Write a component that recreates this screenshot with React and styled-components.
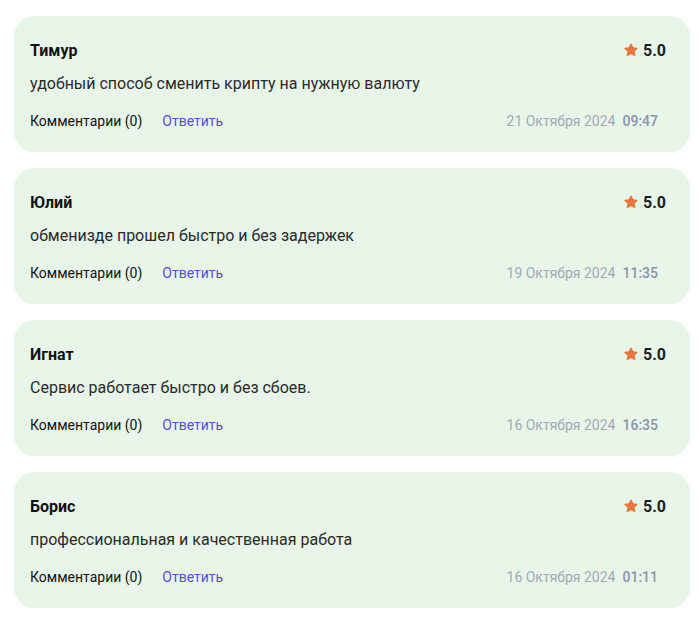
import styled, { createGlobalStyle } from "styled-components";

const Global = createGlobalStyle`
  body {
    margin: 0;
    background: #fff;
    font-family: Roboto, "Liberation Sans", sans-serif;
  }
`;

const List = styled.div`
  display: flex;
  flex-direction: column;
  gap: 16px;
  padding: 16px 9px 0 14px;
`;

const Card = styled.div`
  background: #e8f6ea;
  border-radius: 20px;
  padding: 24px 24px 21px 16px;
  height: 136px;
  box-sizing: border-box;
`;

const Head = styled.div`
  display: flex;
  justify-content: space-between;
  align-items: center;
  height: 20px;
`;

const Name = styled.span`
  font-weight: 700;
  font-size: 16px;
  color: #111;
`;

const Rating = styled.span`
  display: flex;
  align-items: center;
  gap: 4px;
  font-weight: 700;
  font-size: 16px;
  color: #1d1d1f;
`;

const Text = styled.p`
  margin: 14px 0 0;
  font-size: 16px;
  line-height: 20px;
  color: #2a2a2a;
`;

const Footer = styled.div`
  display: flex;
  align-items: center;
  margin-top: 17px;
  padding-right: 8px;
  height: 20px;
  font-size: 14px;
`;

const Comments = styled.span`
  color: #111;
`;

const Reply = styled.a`
  color: #5a4cf0;
  margin-left: 20px;
  cursor: pointer;
`;

const Date = styled.span`
  margin-left: auto;
  color: #a0a9b4;
`;

const Time = styled.span`
  margin-left: 7px;
  color: #8a95a3;
  font-weight: 500;
`;

function Star() {
  return (
    <svg width="16" height="16" viewBox="0 0 24 24">
      <path
        d="M12 2.2c.5 0 .9.3 1.1.7l2.4 5.1 5.5.7c.9.1 1.3 1.3.6 1.9l-4.1 3.8 1.1 5.5c.2.9-.8 1.6-1.6 1.1L12 18.3 7 21c-.8.5-1.8-.2-1.6-1.1l1.1-5.5-4.1-3.8c-.7-.6-.3-1.8.6-1.9l5.5-.7 2.4-5.1c.2-.4.6-.7 1.1-.7z"
        fill="#e8773f"
      />
    </svg>
  );
}

const reviews = [
  { name: "Тимур", text: "удобный способ сменить крипту на нужную валюту", date: "21 Октября 2024", time: "09:47" },
  { name: "Юлий", text: "обменизде прошел быстро и без задержек", date: "19 Октября 2024", time: "11:35" },
  { name: "Игнат", text: "Сервис работает быстро и без сбоев.", date: "16 Октября 2024", time: "16:35" },
  { name: "Борис", text: "профессиональная и качественная работа", date: "16 Октября 2024", time: "01:11" },
];

export default function App() {
  return (
    <>
      <Global />
      <List>
        {reviews.map((r) => (
          <Card key={r.name}>
            <Head>
              <Name>{r.name}</Name>
              <Rating>
                <Star />
                5.0
              </Rating>
            </Head>
            <Text>{r.text}</Text>
            <Footer>
              <Comments>Комментарии (0)</Comments>
              <Reply>Ответить</Reply>
              <Date>{r.date}</Date>
              <Time>{r.time}</Time>
            </Footer>
          </Card>
        ))}
      </List>
    </>
  );
}
